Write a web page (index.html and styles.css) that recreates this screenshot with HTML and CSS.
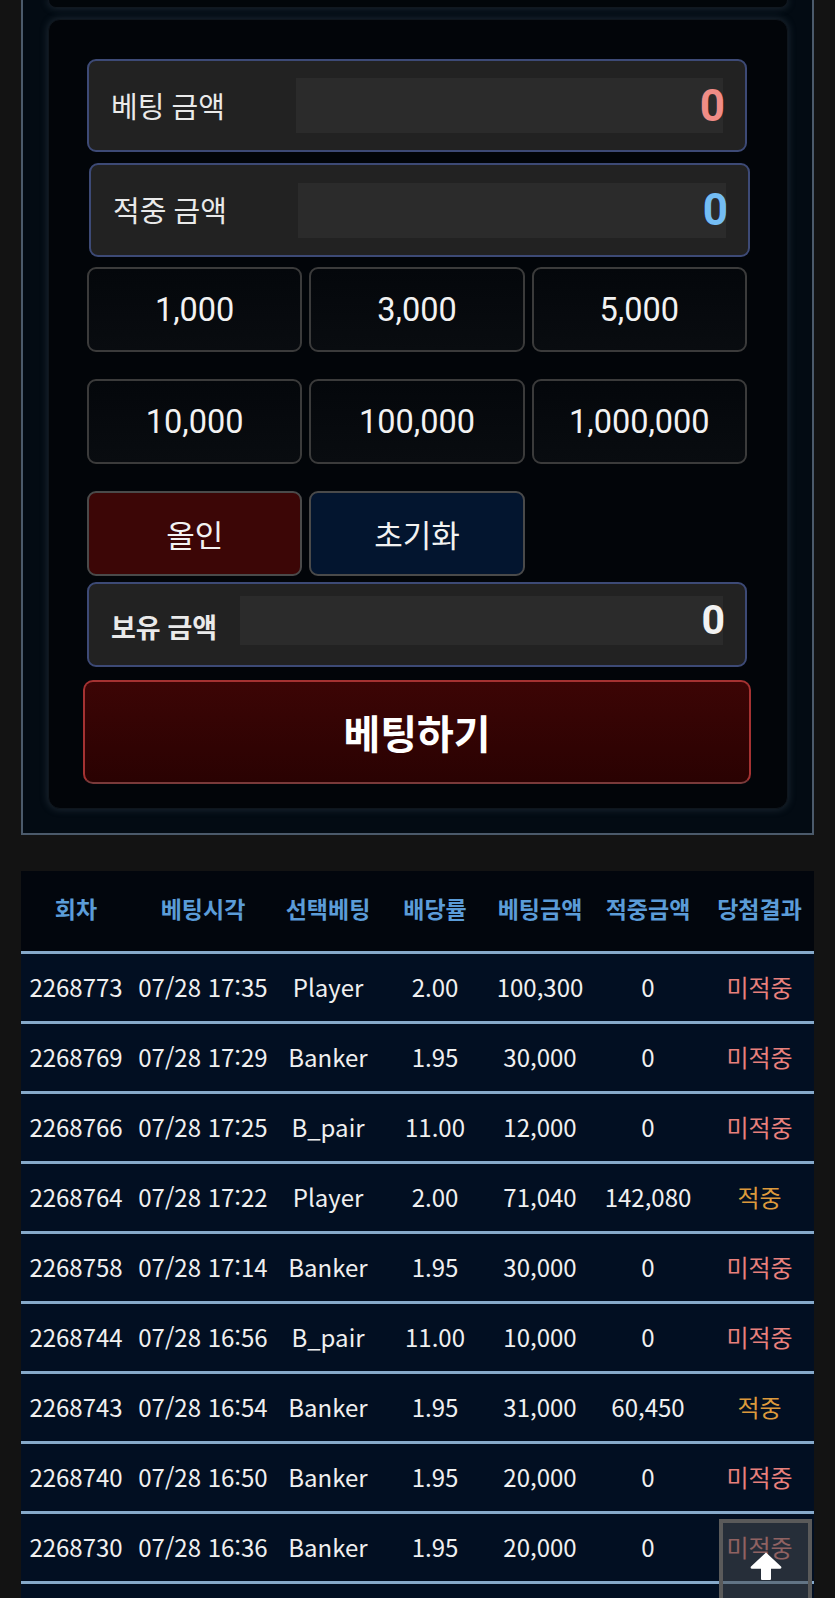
FILE: index.html
```html
<!DOCTYPE html>
<html lang="ko">
<head>
<meta charset="utf-8">
<title>베팅</title>
<link rel="stylesheet" href="styles.css">
</head>
<body>
<div class="panel">
  <div class="prev-card"></div>
  <div class="bet-card">
    <div class="amount-box">
      <span class="amount-label">베팅 금액</span>
      <div class="amount-field"><span class="amount-value red">0</span></div>
    </div>
    <div class="amount-box shift">
      <span class="amount-label">적중 금액</span>
      <div class="amount-field"><span class="amount-value blue">0</span></div>
    </div>
    <div class="chip-grid">
      <button class="chip">1,000</button>
      <button class="chip">3,000</button>
      <button class="chip">5,000</button>
    </div>
    <div class="chip-grid gap-top">
      <button class="chip">10,000</button>
      <button class="chip">100,000</button>
      <button class="chip">1,000,000</button>
    </div>
    <div class="chip-grid gap-top">
      <button class="chip chip-red">올인</button>
      <button class="chip chip-blue">초기화</button>
    </div>
    <div class="amount-box hold">
      <span class="amount-label hold-label">보유 금액</span>
      <div class="amount-field hold-field"><span class="amount-value white">0</span></div>
    </div>
    <button class="bet-btn">베팅하기</button>
  </div>
</div>

<div class="history">
  <table class="hist-table">
    <colgroup>
      <col class="c1"><col class="c2"><col class="c3"><col class="c4"><col class="c5"><col class="c6"><col class="c7">
    </colgroup>
    <thead>
      <tr><th>회차</th><th>베팅시각</th><th>선택베팅</th><th>배당률</th><th>베팅금액</th><th>적중금액</th><th>당첨결과</th></tr>
    </thead>
    <tbody>
      <tr><td>2268773</td><td>07/28 17:35</td><td>Player</td><td>2.00</td><td>100,300</td><td>0</td><td class="lose">미적중</td></tr>
      <tr><td>2268769</td><td>07/28 17:29</td><td>Banker</td><td>1.95</td><td>30,000</td><td>0</td><td class="lose">미적중</td></tr>
      <tr><td>2268766</td><td>07/28 17:25</td><td>B_pair</td><td>11.00</td><td>12,000</td><td>0</td><td class="lose">미적중</td></tr>
      <tr><td>2268764</td><td>07/28 17:22</td><td>Player</td><td>2.00</td><td>71,040</td><td>142,080</td><td class="win">적중</td></tr>
      <tr><td>2268758</td><td>07/28 17:14</td><td>Banker</td><td>1.95</td><td>30,000</td><td>0</td><td class="lose">미적중</td></tr>
      <tr><td>2268744</td><td>07/28 16:56</td><td>B_pair</td><td>11.00</td><td>10,000</td><td>0</td><td class="lose">미적중</td></tr>
      <tr><td>2268743</td><td>07/28 16:54</td><td>Banker</td><td>1.95</td><td>31,000</td><td>60,450</td><td class="win">적중</td></tr>
      <tr><td>2268740</td><td>07/28 16:50</td><td>Banker</td><td>1.95</td><td>20,000</td><td>0</td><td class="lose">미적중</td></tr>
      <tr><td>2268730</td><td>07/28 16:36</td><td>Banker</td><td>1.95</td><td>20,000</td><td>0</td><td class="lose">미적중</td></tr>
    </tbody>
  </table>
  <div class="hist-more"></div>
</div>

<button class="to-top" aria-label="맨 위로">
  <svg viewBox="0 0 32 28" width="32" height="28" aria-hidden="true">
    <path d="M16 0.5 L31 14.5 Q32.2 16.5 29.8 16.8 L21 16.8 L21 27 Q21 28 20 28 L12 28 Q11 28 11 27 L11 16.8 L2.2 16.8 Q-0.2 16.5 1 14.5 Z" fill="#fff"/>
  </svg>
</button>
</body>
</html>
```

FILE: styles.css
```css
* { box-sizing: border-box; }

html, body {
  margin: 0;
  padding: 0;
  background: #131313;
}

body {
  font-family: Roboto, "Noto Sans CJK KR", sans-serif;
  color: #ececec;
  width: 835px;
  overflow: hidden;
}

.panel {
  margin: 0 21px;
  padding: 0 24px 24px 25px;
  background: #030b13;
  border: 2px solid #4b5a6b;
  border-top: none;
}

.prev-card {
  height: 8px;
  background: #02060a;
  border-radius: 0 0 12px 12px;
  border: 1px solid #111820;
  border-top: none;
  box-shadow: 0 0 7px 1px rgba(55, 70, 85, 0.45);
}

.bet-card {
  margin-top: 11px;
  padding: 39px 40px 24px 38px;
  background: #020509;
  border-radius: 12px;
  border: 1px solid #0f161d;
  box-shadow: 0 0 7px 1px rgba(55, 70, 85, 0.45);
  display: flex;
  flex-direction: column;
}

.amount-box {
  height: 93px;
  display: flex;
  align-items: center;
  padding: 0 22px 0 22px;
  background: #222222;
  border: 2px solid #3d4a76;
  border-radius: 9px;
}

.amount-box.shift {
  margin: 11px -3px 0 2px;
  height: 94px;
}

.amount-label {
  width: 185px;
  flex: none;
  font-size: 29px;
  color: #eaeaea;
  padding-bottom: 2px;
  white-space: nowrap;
}

.amount-field {
  flex: 1;
  height: 55px;
  background: #2b2b2b;
  display: flex;
  align-items: center;
  justify-content: flex-end;
}

.amount-value {
  font-size: 44px;
  font-weight: 700;
  line-height: 1;
  margin-right: -2px;
}

.red { color: #f08c86; }
.blue { color: #74bdf4; }
.white { color: #f2f2f2; font-size: 41px; }

.chip-grid {
  margin-top: 10px;
  display: grid;
  grid-template-columns: repeat(3, 1fr);
  column-gap: 7px;
}

.chip-grid.gap-top { margin-top: 27px; }

.chip {
  height: 85px;
  border: 2px solid #3b3b3b;
  border-radius: 9px;
  background: linear-gradient(180deg, #04070b 0%, #090c10 100%);
  color: #f2f2f2;
  font-family: Roboto, "Noto Sans CJK KR", sans-serif;
  font-size: 32.5px;
  padding: 0;
  cursor: pointer;
}

.chip-red {
  background: #3c0606;
  border-color: #4a4a4a;
  font-size: 31px;
}

.chip-blue {
  background: #03152f;
  border-color: #4a4a4a;
  font-size: 31px;
}

.amount-box.hold {
  margin-top: 6px;
  height: 85px;
}

.hold-label {
  width: 129px;
  font-size: 27px;
  font-weight: 700;
  padding-top: 6px;
}

.hold-field {
  height: 49px;
  margin-bottom: 8px;
}

.bet-btn {
  margin: 13px -4px 0 -4px;
  height: 104px;
  border: 2px solid #a53232;
  border-bottom-color: #7a3a3a;
  border-radius: 10px;
  background: linear-gradient(180deg, #3c0505 0%, #2a0202 100%);
  color: #ffffff;
  font-family: Roboto, "Noto Sans CJK KR", sans-serif;
  font-size: 40px;
  font-weight: 700;
  cursor: pointer;
}

.history {
  margin: 36px 21px 0 21px;
  background: #020f22;
}

.hist-table {
  width: 100%;
  table-layout: fixed;
  border-collapse: separate;
  border-spacing: 0;
  font-family: "Noto Sans CJK KR", sans-serif;
}

.c1 { width: 110px; }
.c2 { width: 144px; }
.c3 { width: 106px; }
.c4 { width: 108px; }
.c5 { width: 102px; }
.c6 { width: 114px; }
.c7 { width: 109px; }

.hist-table th {
  background: #02060d;
  color: #5b9cd8;
  font-size: 23px;
  font-weight: 700;
  line-height: 74px;
  padding: 0 0 6px 0;
  height: 80px;
  border-bottom: 3px solid #86a9ca;
  white-space: nowrap;
}

.hist-table td {
  text-align: center;
  color: #f0f0f0;
  font-size: 24px;
  line-height: 66px;
  padding: 0 0 1px 0;
  border-bottom: 3px solid #86a9ca;
  white-space: nowrap;
}

.hist-table td.lose { color: #e8807c; }
.hist-table td.win { color: #dc9a3c; }

.hist-more {
  height: 60px;
}

.to-top {
  position: fixed;
  right: 23px;
  bottom: -14px;
  width: 93px;
  height: 93px;
  padding: 0;
  border: 4px solid #5a5a5a;
  background: rgba(70, 72, 76, 0.55);
  display: flex;
  align-items: center;
  justify-content: center;
  cursor: pointer;
}
```
